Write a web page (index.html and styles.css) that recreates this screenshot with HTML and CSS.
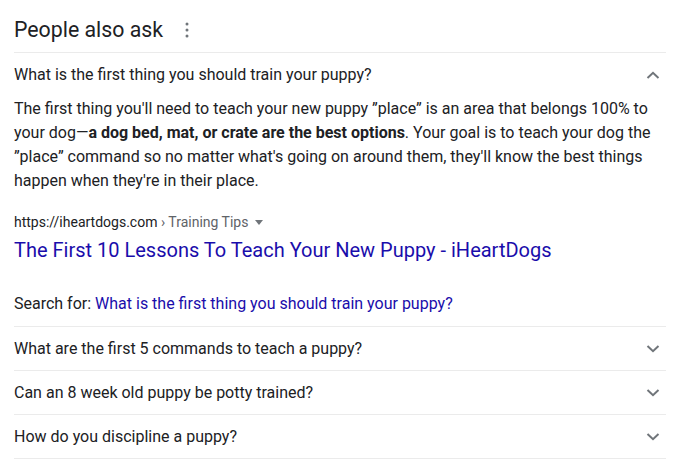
FILE: index.html
```html
<!DOCTYPE html>
<html>
<head>
<meta charset="utf-8">
<link rel="stylesheet" href="styles.css">
</head>
<body>
<div class="paa">
  <div class="head">
    <h2 class="title">People also ask</h2>
    <svg class="dots" width="4" height="16" viewBox="0 0 4 16"><circle cx="2" cy="2" r="1.5"/><circle cx="2" cy="8" r="1.5"/><circle cx="2" cy="14" r="1.5"/></svg>
  </div>
  <div class="item open">
    <div class="q">
      <span>What is the first thing you should train your puppy?</span>
      <svg class="chev" width="14" height="8" viewBox="0 0 14 8"><path d="M1.5 7 L7 1.8 L12.5 7" fill="none" stroke="#70757a" stroke-width="2"/></svg>
    </div>
    <div class="answer">
      <p class="snippet">The first thing you'll need to teach your new puppy ”place” is an area that belongs 100% to your dog—<b>a dog bed, mat, or crate are the best options</b>. Your goal is to teach your dog the ”place” command so no matter what's going on around them, they'll know the best things happen when they're in their place.</p>
      <div class="cite"><span class="url">https://iheartdogs.com</span><span class="crumb"> › Training Tips</span><span class="tri"></span></div>
      <a class="link" href="#">The First 10 Lessons To Teach Your New Puppy - iHeartDogs</a>
      <div class="search">Search for: <a href="#">What is the first thing you should train your puppy?</a></div>
    </div>
  </div>
  <div class="item">
    <div class="q"><span>What are the first 5 commands to teach a puppy?</span>
      <svg class="chev" width="14" height="8" viewBox="0 0 14 8"><path d="M1.5 1 L7 6.2 L12.5 1" fill="none" stroke="#70757a" stroke-width="2"/></svg></div>
  </div>
  <div class="item">
    <div class="q"><span>Can an 8 week old puppy be potty trained?</span>
      <svg class="chev" width="14" height="8" viewBox="0 0 14 8"><path d="M1.5 1 L7 6.2 L12.5 1" fill="none" stroke="#70757a" stroke-width="2"/></svg></div>
  </div>
  <div class="item">
    <div class="q"><span>How do you discipline a puppy?</span>
      <svg class="chev" width="14" height="8" viewBox="0 0 14 8"><path d="M1.5 1 L7 6.2 L12.5 1" fill="none" stroke="#70757a" stroke-width="2"/></svg></div>
  </div>
</div>
</body>
</html>
```
FILE: styles.css
```css
html, body {
  margin: 0;
  padding: 0;
  background: #fff;
}
body {
  font-family: Roboto, "Liberation Sans", Arial, sans-serif;
  color: #202124;
}
.paa {
  width: 652px;
  margin-left: 14px;
}
.head {
  height: 52px;
  display: flex;
  align-items: center;
  gap: 22px;
  border-bottom: 1px solid #ebebeb;
}
.title {
  margin: 0;
  font-size: 21.3px;
  font-weight: 400;
  line-height: 28px;
  padding-top: 8px;
  color: #202124;
}
.dots {
  fill: #70757a;
  margin-top: 7px;
}
.item {
  border-bottom: 1px solid #ebebeb;
}
.q {
  height: 43px;
  display: flex;
  align-items: center;
  justify-content: space-between;
  font-size: 16px;
  line-height: 24px;
}
.chev {
  margin-right: 6px;
}
.answer {
  padding: 1px 0 10px;
}
.snippet {
  margin: 0;
  font-size: 16px;
  line-height: 24px;
}
.snippet b {
  font-weight: 700;
}
.cite {
  margin-top: 18px;
  font-size: 14px;
  line-height: 22px;
  display: flex;
  align-items: center;
}
.url {
  color: #202124;
}
.crumb {
  color: #5f6368;
  white-space: pre;
}
.tri {
  width: 0;
  height: 0;
  border-left: 4.5px solid transparent;
  border-right: 4.5px solid transparent;
  border-top: 5px solid #70757a;
  margin-left: 7px;
  margin-top: 1px;
}
.link {
  display: block;
  margin-top: 4px;
  font-size: 20px;
  line-height: 26px;
  color: #1a0dab;
  text-decoration: none;
}
.search {
  margin-top: 29px;
  font-size: 16px;
  line-height: 24px;
}
.search a {
  color: #1a0dab;
  text-decoration: none;
}
```
